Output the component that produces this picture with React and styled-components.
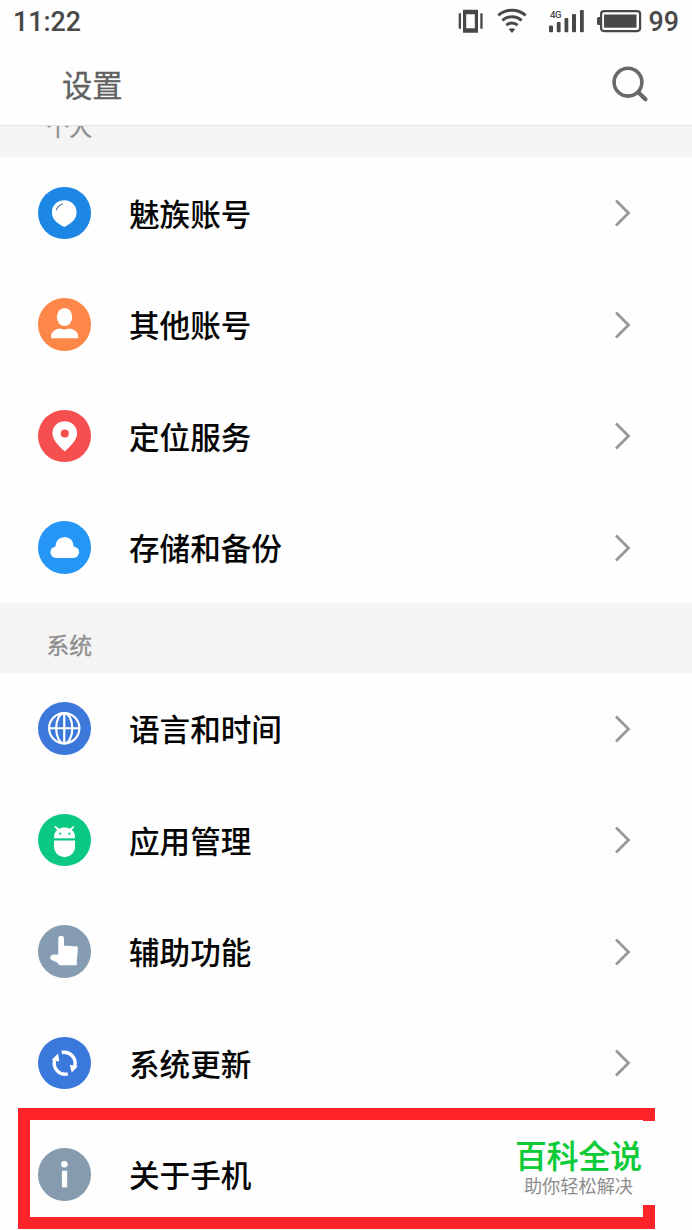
import styled, { createGlobalStyle } from 'styled-components';

const GlobalStyle = createGlobalStyle`
	body {
		margin: 0;
		background: #fefefe;
		font-family: Roboto, 'Noto Sans CJK SC', sans-serif;
	}
`;

const Screen = styled.div`
	position: relative;
	width: 692px;
	height: 1230px;
	overflow: hidden;
	display: flex;
	flex-direction: column;
	background: #fefefe;
`;

const StatusBar = styled.div`
	box-sizing: border-box;
	height: 42px;
	flex: none;
	display: flex;
	align-items: center;
	justify-content: space-between;
	padding: 0 13px;
	color: #484848;
`;

const StatusText = styled.span`
	padding-top: 1px;
	font-size: 26.8px;
	line-height: 42px;
	font-weight: 500;
`;

const StatusIcons = styled.div`
	display: flex;
	align-items: center;
	height: 42px;
`;

const StatusSvg = styled.svg`
	display: block;
	margin-right: 7px;
`;

const TitleBar = styled.div`
	box-sizing: border-box;
	height: 84px;
	flex: none;
	display: flex;
	justify-content: space-between;
	padding: 0 40px 0 62px;
	border-bottom: 1px solid #e4e4e4;
`;

const Title = styled.h1`
	margin: 0;
	font-size: 30.3px;
	line-height: 90px;
	font-weight: 400;
	color: #606060;
	-webkit-text-stroke: 0.3px #606060;
`;

const SectionHeader = styled.div`
	box-sizing: border-box;
	flex: none;
	display: flex;
	align-items: flex-end;
	overflow: hidden;
	height: ${props => props.$height};
	padding: 0 46.5px ${props => props.$bottom};
	background: #f4f4f4;
	color: #8e8e8e;
	font-size: 22.8px;
	line-height: 32px;
	-webkit-text-stroke: 0.3px #8e8e8e;
`;

const List = styled.div`
	flex: none;
`;

const Row = styled.div`
	box-sizing: border-box;
	height: 111.5px;
	display: flex;
	align-items: center;
	padding: 0 57px 0 38px;
`;

const IconCircle = styled.div`
	width: 52.5px;
	height: 52.5px;
	border-radius: 50%;
	flex: none;
	background: ${props => props.$color};
`;

const Label = styled.span`
	flex: 1;
	margin-left: 38.5px;
	padding-top: 5px;
	font-size: 30.6px;
	line-height: 44px;
	font-weight: 500;
	color: #050505;
`;

const Highlight = styled.div`
	position: absolute;
	box-sizing: border-box;
	left: 18px;
	top: 1107.5px;
	width: 637px;
	height: 121.5px;
	border: 12px solid #fe2329;
`;

const Watermark = styled.div`
	position: absolute;
	box-sizing: border-box;
	left: 488px;
	top: 1121px;
	width: 181px;
	height: 84px;
	padding-top: 15px;
	display: flex;
	flex-direction: column;
	align-items: center;
	background: #fefefe;
`;

const Brand = styled.span`
	font-size: 31.8px;
	line-height: 42px;
	font-weight: 500;
	color: #0ccb37;
	-webkit-text-stroke: 0.2px #0ccb37;
`;

const Slogan = styled.span`
	font-size: 18.2px;
	line-height: 17px;
	color: #8c8c8c;
`;

const Chevron = () => (
	<svg width="22" height="32" viewBox="0 0 22 32" fill="none" stroke="#989898" strokeWidth="2.800">
		<path d="M3 3.500 15.500 16 3 28.500" />
	</svg>
);

// Glyphs are drawn in a 52x52 box, the size of the circle
const glyphs = {
	balloon: (
		<>
			<path fill="#fff" d="M26 13.200c7 0 12.200 5.200 12.200 12 0 6.300-4 10.300-12.200 14.300-8.200-4-12.200-8-12.200-14.300 0-6.800 5.200-12 12.200-12z" />
			<path fill="none" stroke="#456f98" strokeWidth="1.100" strokeLinecap="round" d="M18.200 22.500c1.200-2.800 3.300-4.800 6-5.700" />
		</>
	),
	person: (
		<>
			<ellipse fill="#fff" cx="26.300" cy="18.800" rx="7.600" ry="9" />
			<path fill="#fff" d="M13 39.800v-2c0-4.500 4.700-7.600 9.200-7.600 2.600 1.400 5.600 1.400 8.200 0 4.500 0 9.400 3.100 9.400 7.600v2z" />
		</>
	),
	pin: (
		<path fill="#fff" fillRule="evenodd" d="M26.500 11.200c7 0 12.200 5.100 12.200 11.900 0 6-5.200 11.600-12.200 18-7-6.400-12.200-12-12.200-18 0-6.800 5.200-11.900 12.200-11.900zm0 8.100a4 4 0 1 0 0 8 4 4 0 0 0 0-8z" />
	),
	cloud: (
		<g fill="#fff">
			<circle cx="26.300" cy="24.800" r="9" />
			<circle cx="18" cy="31" r="5.700" />
			<circle cx="35" cy="31" r="5.700" />
			<path d="M18 27h17v9.700H18z" />
		</g>
	),
	globe: (
		<g fill="none" stroke="#fff" strokeWidth="2.200">
			<circle cx="26" cy="26" r="15" />
			<ellipse cx="26" cy="26" rx="8" ry="15" />
			<path d="M11 26h30M26 11v30" />
		</g>
	),
	android: (
		<>
			<path fill="#fff" d="M15.900 24v-1.500c0-3 1.200-5.200 3-6.700l-2.800-3.100 1.400-.9 3.400 2.800c3.200-1.700 7.400-1.700 10.600 0l3.300-2.800 1.400.9-2.700 3.100c1.900 1.500 3.100 3.700 3.100 6.700V24z" />
			<circle fill="#0bc982" cx="22" cy="19.500" r="1.100" />
			<circle fill="#0bc982" cx="31" cy="19.500" r="1.100" />
			<path fill="#fff" d="M15.900 26.200h20.800v6c0 5.800-4.300 10.300-10.400 10.300s-10.400-4.500-10.400-10.300z" />
		</>
	),
	hand: (
		<path fill="#fff" stroke="#fff" strokeWidth="1.200" strokeLinejoin="round" d="M20.700 29.500V13.500c0-3 4.400-3 4.400 0v7.500l13.600.8v4.800l-.9 8.700v4H21.500c-1-2-2.200-2.800-4.200-3.600-2-.9-3.600-1.500-4.600-2.600-.5-2.200 1.700-3.500 4.100-3.200z" />
	),
	update: (
		<>
			<g fill="none" stroke="#fff" strokeWidth="3.400">
				<path d="M23.500 15.400A10.900 10.900 0 0 1 36.400 29" />
				<path d="M29.500 36.600A10.900 10.900 0 0 1 16.500 23" />
			</g>
			<path fill="#fff" d="m31.500 27.500 7.800 1.600-5.900 6zM13.400 22.900l6.500-6.500 1.200 7.800z" />
		</>
	),
	info: (
		<>
			<circle fill="#fff" cx="26.200" cy="16" r="3.200" />
			<path fill="#fff" d="M23.700 22.500h5.200V39h-5.200z" />
		</>
	),
};

const personal = [
	{ label: '魅族账号', icon: 'balloon', color: '#1d87e5' },
	{ label: '其他账号', icon: 'person', color: '#fd8748' },
	{ label: '定位服务', icon: 'pin', color: '#f54f50' },
	{ label: '存储和备份', icon: 'cloud', color: '#2596f5' },
];

const system = [
	{ label: '语言和时间', icon: 'globe', color: '#3b78d9' },
	{ label: '应用管理', icon: 'android', color: '#0bc982' },
	{ label: '辅助功能', icon: 'hand', color: '#869cb2' },
	{ label: '系统更新', icon: 'update', color: '#3b78dc' },
	{ label: '关于手机', icon: 'info', color: '#869cae' },
];

const SettingsList = ({ items }) => (
	<List>
		{items.map(item => (
			<Row key={item.label}>
				<IconCircle $color={item.color}>
					<svg width="52.500" height="52.500" viewBox="0 0 52 52" display="block">
						{glyphs[item.icon]}
					</svg>
				</IconCircle>
				<Label>{item.label}</Label>
				<Chevron />
			</Row>
		))}
	</List>
);

const StatusGlyphs = () => (
	<StatusSvg width="184" height="42" viewBox="458 0 184 42" fill="#484848">
		{/* Vibrate */}
		<path d="M458.700 13.300h2.300v15.500h-2.300zM480.300 13.300h2.300v15.500h-2.300z" />
		<path fillRule="evenodd" d="M463 9.700h15v23h-15zM466.200 14.200v14h8.600v-14z" />
		{/* Wifi */}
		<g fill="none" stroke="#484848" strokeWidth="2.900">
			<path d="M498.300 15.300c8-6.800 19.400-6.800 27.400 0" />
			<path d="M502.300 20.300c5.800-4.800 13.600-4.800 19.400 0" />
			<path d="M506.300 25.200c3.500-2.700 7.900-2.700 11.400 0" />
		</g>
		<path d="M508.800 29.300c2-1.500 4.400-1.500 6.400 0l-3.200 3.600z" />
		{/* Mobile signal */}
		<text x="550" y="17.700" fontFamily="Roboto, sans-serif" fontSize="9.500" fontWeight="500" textLength="11.500">4G</text>
		<rect x="549" y="25.500" width="4" height="6.800" rx="1" />
		<rect x="556.800" y="22" width="3.800" height="10.300" rx="1" />
		<rect x="564.500" y="18" width="3.800" height="14.300" rx="1" />
		<rect x="572" y="14" width="4" height="18.300" rx="1" />
		<rect x="580" y="10" width="3.800" height="22.300" rx="1" />
		{/* Battery */}
		<rect x="601.100" y="11.100" width="39" height="20" rx="3" fill="none" stroke="#484848" strokeWidth="2.200" />
		<rect x="604" y="14.500" width="32.500" height="13.200" />
		<path d="M600 17h-1.500a1.500 1.500 0 0 0-1.500 1.500v5a1.500 1.500 0 0 0 1.500 1.500h1.500z" />
	</StatusSvg>
);

const App = () => (
	<Screen>
		<GlobalStyle />
		<StatusBar>
			<StatusText>11:22</StatusText>
			<StatusIcons>
				<StatusGlyphs />
				<StatusText>99</StatusText>
			</StatusIcons>
		</StatusBar>
		<TitleBar>
			<Title>设置</Title>
			<svg width="44" height="83" viewBox="608 42 44 83" fill="none" stroke="#686868" strokeWidth="3.600">
				<circle cx="628" cy="82.200" r="13.900" />
				<path strokeLinecap="round" strokeWidth="4.200" d="m638.500 92.500 7 6.700" />
			</svg>
		</TitleBar>
		<SectionHeader $height="31.250px" $bottom="12px">个人</SectionHeader>
		<SettingsList items={personal} />
		<SectionHeader $height="69.500px" $bottom="10px">系统</SectionHeader>
		<SettingsList items={system} />
		<Highlight />
		<Watermark>
			<Brand>百科全说</Brand>
			<Slogan>助你轻松解决</Slogan>
		</Watermark>
	</Screen>
);

export default App;
